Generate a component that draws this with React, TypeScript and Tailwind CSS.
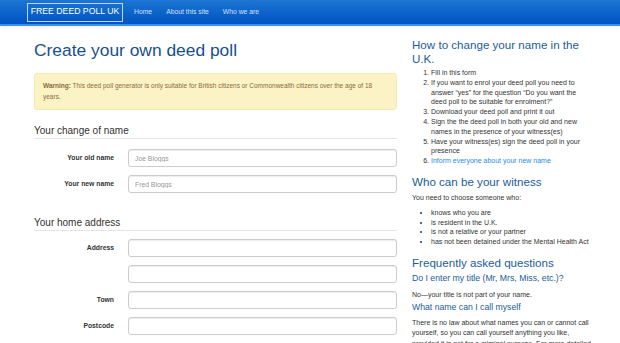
const font = { fontFamily: '"Liberation Sans", Arial, Helvetica, sans-serif' };

type FieldProps = { label?: string; placeholder?: string };

function Field({ label, placeholder }: FieldProps) {
  return (
    <div className="flex items-center gap-[14px]">
      <label className="w-[80px] shrink-0 text-right text-[6.8px] font-bold text-[#333]">{label}</label>
      <input
        className="h-[18px] flex-1 rounded-[3px] border border-[#ccc] bg-white px-[6px] text-[6.8px] text-[#555] shadow-[inset_0_1px_1px_rgba(0,0,0,0.075)] outline-none placeholder:text-[#999]"
        placeholder={placeholder}
      />
    </div>
  );
}

function Legend({ children, className }: { children: string; className: string }) {
  return (
    <div className={`border-b border-[#e5e5e5] text-[10px] leading-[14px] text-[#333] ${className}`}>{children}</div>
  );
}

const steps = [
  "Fill in this form",
  "If you want to enrol your deed poll you need to answer \u201cyes\u201d for the question \u201cDo you want the deed poll to be suitable for enrolment?\u201d",
  "Download your deed poll and print it out",
  "Sign the the deed poll in both your old and new names in the presence of your witness(es)",
  "Have your witness(es) sign the deed poll in your presence",
];

const witness = [
  "knows who you are",
  "is resident in the U.K.",
  "is not a relative or your partner",
  "has not been detained under the Mental Health Act",
];

export default function App() {
  return (
    <div className="h-[343px] w-[620px] overflow-hidden bg-white" style={font}>
      {/* navbar */}
      <div className="h-[26px] border-b-2 border-[#3a8fe0] bg-gradient-to-b from-[#1c76d3] to-[#0252c3] shadow-[0_2px_3px_rgba(0,0,0,0.06)]">
        <div className="flex h-[24px] items-center pl-[27px]">
          <div className="flex h-[19px] w-[96px] items-center justify-center border border-[#bcd6f4] text-[8.7px] text-white">
            FREE DEED POLL UK
          </div>
          <div className="ml-[11px] flex gap-[14px] text-[6.8px] text-[#cfe0f6]">
            <span>Home</span>
            <span>About this site</span>
            <span>Who we are</span>
          </div>
        </div>
      </div>

      <div className="flex gap-[15px] pl-[34px]">
        {/* left column */}
        <div className="w-[363px] shrink-0">
          <h1 className="mt-[14px] text-[17.4px] leading-[20px] text-[#18508f]">Create your own deed poll</h1>
          <div className="mt-[13px] rounded-[3px] border border-[#f6e9b0] bg-[#fbf2c6] px-[8px] py-[7px] text-[6.5px] leading-[10.5px] text-[#8a6d3b]">
            <b>Warning:</b> This deed poll generator is only suitable for British citizens or Commonwealth citizens over the age of 18 years.
          </div>

          <Legend className="mt-[14px]">Your change of name</Legend>
          <div className="mt-[10px] flex flex-col gap-[8px]">
            <Field label="Your old name" placeholder="Joe Bloggs" />
            <Field label="Your new name" placeholder="Fred Bloggs" />
          </div>

          <Legend className="mt-[23px]">Your home address</Legend>
          <div className="mt-[8px] flex flex-col gap-[8px]">
            <Field label="Address" />
            <Field />
            <Field label="Town" />
            <Field label="Postcode" />
          </div>
        </div>

        {/* right column */}
        <div className="w-[188px] shrink-0 text-[7px] leading-[9.8px] text-[#333]">
          <h2 className="mt-[12px] text-[11.6px] leading-[13.5px] text-[#1b5d9c]">How to change your name in the U.K.</h2>
          <ol className="mt-[3px] list-decimal pl-[19px] pr-[12px]">
            {steps.map((s) => (
              <li key={s}>{s}</li>
            ))}
            <li>
              <span className="text-[#2a8be0]">Inform everyone about your new name</span>
            </li>
          </ol>

          <h2 className="mt-[9px] text-[11.6px] leading-[13.5px] text-[#1b5d9c]">Who can be your witness</h2>
          <p className="mt-[4.5px]">You need to choose someone who:</p>
          <ul className="mt-[5px] list-disc pl-[19px]">
            {witness.map((w) => (
              <li key={w}>{w}</li>
            ))}
          </ul>

          <h2 className="mt-[9px] text-[11.6px] leading-[13.5px] text-[#1b5d9c]">Frequently asked questions</h2>
          <h4 className="mt-[4px] text-[8.7px] leading-[11px] text-[#1b5d9c]">Do I enter my title (Mr, Mrs, Miss, etc.)?</h4>
          <p className="mt-[5.5px]">No&mdash;your title is not part of your name.</p>
          <h4 className="mt-[2.5px] text-[8.7px] leading-[11px] text-[#1b5d9c]">What name can I call myself</h4>
          <p className="mt-[4.5px] leading-[10.5px]">
            There is no law about what names you can or cannot call yourself, so you can call yourself anything you like,
            <br />
            provided it is not for a criminal purpose. For more detailed information see our guide.
          </p>
        </div>
      </div>
    </div>
  );
}
